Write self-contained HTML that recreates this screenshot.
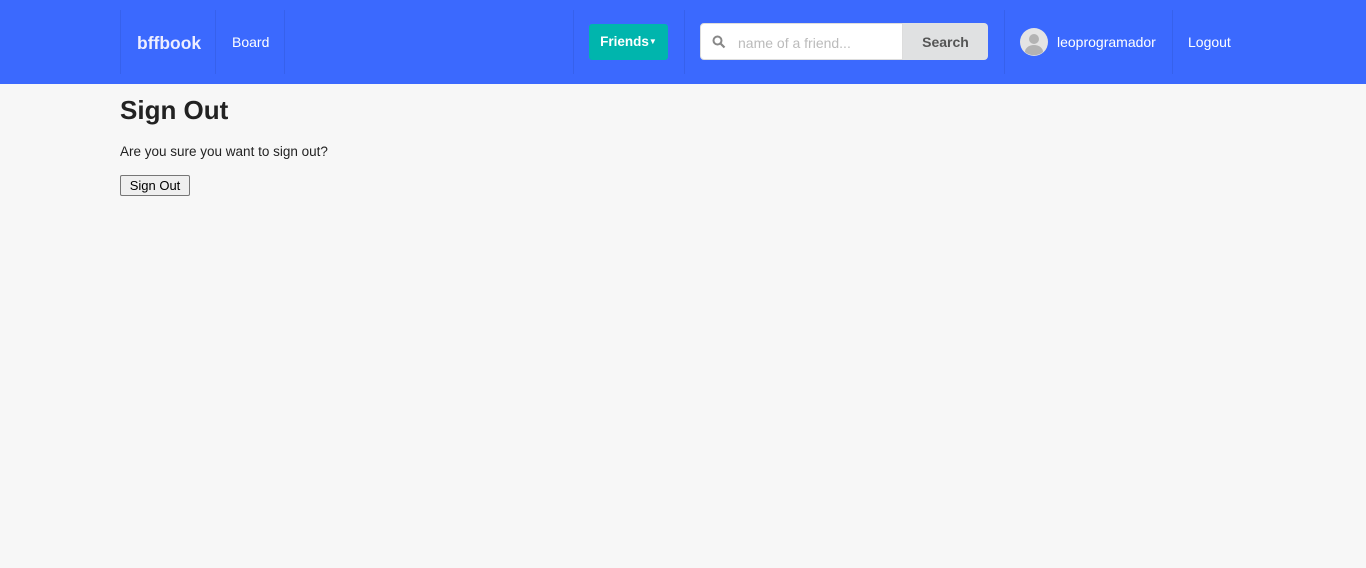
<!DOCTYPE html>
<html><head><style>
body{margin:0;width:1366px;height:568px;background:#f7f7f7;font-family:"Liberation Sans",sans-serif;position:relative;overflow:hidden}
.nav{position:absolute;left:0;top:0;width:1366px;height:84px;background:#3b69fe}
.d{position:absolute;top:10px;height:64px;width:1px;background:rgba(0,0,0,0.07)}
.t{position:absolute;color:#fff;font-size:14px;line-height:16px}
</style></head><body>
<div class="nav">
<div class="d" style="left:120px"></div><div class="d" style="left:215px"></div><div class="d" style="left:284px"></div>
<div class="d" style="left:573px"></div><div class="d" style="left:684px"></div><div class="d" style="left:1004px"></div><div class="d" style="left:1172px"></div>
<div class="t" style="left:137px;top:33px;font-size:17.5px;line-height:20px;font-weight:bold;color:#eef">bffbook</div>
<div class="t" style="left:232px;top:34px">Board</div>
<div style="position:absolute;left:589px;top:24px;width:79px;height:36px;background:#00b5ad;border-radius:3px;color:#fff;font-weight:bold;font-size:13.5px;line-height:36px;text-align:center">Friends<span style="font-size:8px;vertical-align:2px">▼</span></div>
<div style="position:absolute;left:700px;top:23px;width:203px;height:37px;background:#fff;border-radius:4px 0 0 4px;border:1px solid #ddd;box-sizing:border-box"></div>
<svg style="position:absolute;left:712px;top:35px" width="14" height="14" viewBox="0 0 14 14"><circle cx="5.5" cy="5.5" r="4" fill="none" stroke="#888" stroke-width="2"/><path d="M8.5 8.5L12.5 12.5" stroke="#888" stroke-width="2.2"/></svg>
<div class="t" style="left:738px;top:35px;color:#bbb">name of a friend...</div>
<div style="position:absolute;left:903px;top:23px;width:85px;height:37px;background:#e0e1e2;border-radius:0 4px 4px 0;color:#555;font-size:14px;line-height:38px;text-align:center;font-weight:600">Search</div>
<svg style="position:absolute;left:1020px;top:28px" width="28" height="28" viewBox="0 0 28 28"><circle cx="14" cy="14" r="14" fill="#e4e4e4"/><circle cx="14" cy="11" r="5" fill="#b3b3b3"/><path d="M5 24a9 7 0 0 1 18 0a14 14 0 0 1-18 0z" fill="#b3b3b3"/></svg>
<div class="t" style="left:1057px;top:34px">leoprogramador</div>
<div class="t" style="left:1188px;top:34px">Logout</div>
</div>
<div style="position:absolute;left:120px;top:94px;font-size:26px;font-weight:bold;color:#222;line-height:32px">Sign Out</div>
<div style="position:absolute;left:120px;top:144px;font-size:13.5px;color:#222">Are you sure you want to sign out?</div>
<button style="position:absolute;left:120px;top:175px;height:21px;width:70px;font-family:'Liberation Sans',sans-serif;font-size:13px;padding:0;border:1px solid #767676;border-radius:2px;background:#efefef;color:#000">Sign Out</button>
</body></html>
